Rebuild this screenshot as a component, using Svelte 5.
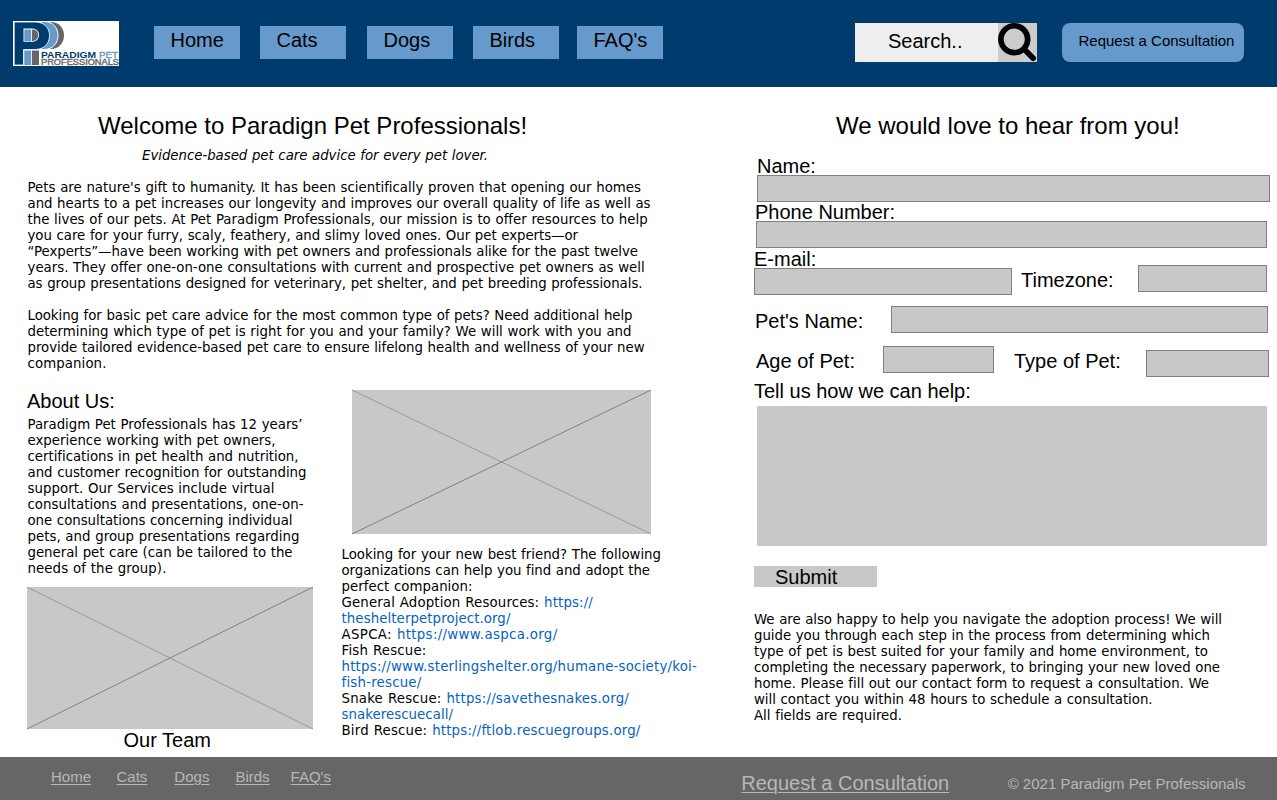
<script>
  const nav = [
    { label: 'Home', gap: 0 },
    { label: 'Cats', gap: 20 },
    { label: 'Dogs', gap: 21 },
    { label: 'Birds', gap: 20 },
    { label: "FAQ's", gap: 18 }
  ];
  const intro = [
    ["Pets are nature's gift to humanity. It has been scientifically proven that opening our homes", 613.5],
    ['and hearts to a pet increases our longevity and improves our overall quality of life as well as', 623],
    ['the lives of our pets. At Pet Paradigm Professionals, our mission is to offer resources to help', 620],
    ['you care for your furry, scaly, feathery, and slimy loved ones. Our pet experts—or', 550.5],
    ['“Pexperts”—have been working with pet owners and professionals alike for the past twelve', 610.5],
    ['years. They offer one-on-one consultations with current and prospective pet owners as well', 617],
    ['as group presentations designed for veterinary, pet shelter, and pet breeding professionals.', 615]
  ];
  const advice = [
    ['Looking for basic pet care advice for the most common type of pets? Need additional help', 605],
    ['determining which type of pet is right for you and your family? We will work with you and', 604],
    ['provide tailored evidence-based pet care to ensure lifelong health and wellness of your new', 617],
    ['companion.', 79]
  ];
  const about = [
    ['Paradigm Pet Professionals has 12 years’', 275],
    ['experience working with pet owners,', 248],
    ['certifications in pet health and nutrition,', 271],
    ['and customer recognition for outstanding', 279],
    ['support. Our Services include virtual', 247],
    ['consultations and presentations, one-on-', 276],
    ['one consultations concerning individual', 265],
    ['pets, and group presentations regarding', 272],
    ['general pet care (can be tailored to the', 265],
    ['needs of the group).', 139]
  ];
  const resources = [
    ['Looking for your new best friend? The following', '', 319.5],
    ['organizations can help you find and adopt the', '', 308.5],
    ['perfect companion:', '', 131],
    ['General Adoption Resources: ', 'https://', 251.5],
    ['', 'theshelterpetproject.org/', 169],
    ['ASPCA: ', 'https://www.aspca.org/', 216],
    ['Fish Rescue:', '', 85],
    ['', 'https://www.sterlingshelter.org/humane-society/koi-', 355.5],
    ['', 'fish-rescue/', 80],
    ['Snake Rescue: ', 'https://savethesnakes.org/', 287.5],
    ['', 'snakerescuecall/', 111.5],
    ['Bird Rescue: ', 'https://ftlob.rescuegroups.org/', 299]
  ];
  const closing = [
    ['We are also happy to help you navigate the adoption process! We will', 468],
    ['guide you through each step in the process from determining which', 456],
    ['type of pet is best suited for your family and home environment, to', 454],
    ['completing the necessary paperwork, to bringing your new loved one', 466],
    ['home. Please fill out our contact form to request a consultation. We', 455],
    ['will contact you within 48 hours to schedule a consultation.', 398.5],
    ['All fields are required.', 148]
  ];

  // Tracks the letters of a line so that it sets to the given measure.
  function measure(node, width) {
    const natural = node.getBoundingClientRect().width;
    node.style.letterSpacing = (width - natural) / node.textContent.length + 'px';
  }
</script>

{#snippet copy(lines)}
  {#each lines as [text, width]}
    <div class="line"><span use:measure={width}>{text}</span></div>
  {/each}
{/snippet}

{#snippet placeholder(w, h)}
  <svg class="placeholder" width={w} height={h} viewBox="0 0 {w} {h}">
    <rect width={w} height={h} fill="#c8c8c8" />
    <path d="M0 0L{w} {h}" stroke="#999" />
    <path d="M0 {h}L{w} 0" stroke="#808080" />
  </svg>
{/snippet}

<div class="page">
  <header>
    <svg class="logo" width="106" height="45" viewBox="0 0 106 45">
      <rect width="106" height="45" fill="#fff" />
      <path d="M34 1H37.500C46 1 51 7 51 14.500S46 28 37.500 28H34Z" fill="#666" />
      <path d="M28 .5H31C40 .5 45 7 45 14.500S40 28.500 31 28.500H28Z" fill="#69c" stroke="#fff" />
      <path d="M1.200 1H22C31 1 36.500 6.500 36.500 14.500S31 28.500 22 28.500H10.500V44H1.200Z" fill="#003b6d" stroke="#fff" stroke-width=".8" />
      <path d="M10.500 7.500H19C23 7.500 26 10 26 14S23 20.800 19 20.800H10.500Z" fill="#fff" />
      <path d="M11.300 8.500H18.200V20H11.300ZM11.300 29.500H18.200V44H11.300Z" fill="#69c" />
      <path d="M19 8.500C23 8.500 25.200 10.500 25.200 14S23 20 19 20ZM19 29.500H26V44H19Z" fill="#666" />
      <text x="28" y="36.500" font-size="9.200" font-weight="700" textLength="55" lengthAdjust="spacingAndGlyphs" fill="#003b6d">PARADIGM</text>
      <text x="86" y="36.500" font-size="9.200" textLength="19" lengthAdjust="spacingAndGlyphs" fill="#69c" stroke="#69c" stroke-width=".35">PET</text>
      <text x="28" y="44.100" font-size="9.200" textLength="78" lengthAdjust="spacingAndGlyphs" fill="#666" stroke="#666" stroke-width=".4">PROFESSIONALS</text>
    </svg>
    <nav>
      {#each nav as item}
        <a href="#top" class="tab" style:margin-left="{item.gap}px">{item.label}</a>
      {/each}
    </nav>
    <div class="search">
      <span>Search..</span>
      <svg width="39" height="39" viewBox="0 0 39 39">
        <rect width="39" height="39" fill="#ccc" />
        <circle cx="16.300" cy="16.200" r="13.400" fill="none" stroke="#000" stroke-width="5.600" />
        <path d="M26.500 26.500L35.200 35.300" stroke="#000" stroke-width="5.600" stroke-linecap="round" />
      </svg>
    </div>
    <a href="#top" class="consult">Request a Consultation</a>
  </header>

  <main>
    <section class="left">
      <h1>Welcome to Paradign Pet Professionals!</h1>
      <div class="tagline line"><span use:measure={346}>Evidence-based pet care advice for every pet lover.</span></div>
      <div class="intro">{@render copy(intro)}</div>
      <div class="advice">{@render copy(advice)}</div>
      <div class="columns">
        <div class="about">
          <h2>About Us:</h2>
          <div class="about-text">{@render copy(about)}</div>
          {@render placeholder(286, 142)}
          <h2 class="team">Our Team</h2>
        </div>
        <div class="resources">
          {@render placeholder(299, 144)}
          <div class="links">
            {#each resources as [text, link, width]}
              <div class="line"><span use:measure={width}>{text}{#if link}<a href="#top">{link}</a>{/if}</span></div>
            {/each}
          </div>
        </div>
      </div>
    </section>

    <section class="right">
      <h1>We would love to hear from you!</h1>
      <div class="label name">Name:</div>
      <div class="field f-name"></div>
      <div class="label phone">Phone Number:</div>
      <div class="field f-phone"></div>
      <div class="row email-row">
        <div class="email">
          <div class="label">E-mail:</div>
          <div class="field"></div>
        </div>
        <div class="label zone">Timezone:</div>
        <div class="field f-zone"></div>
      </div>
      <div class="row pet-row">
        <div class="label">Pet's Name:</div>
        <div class="field f-pet"></div>
      </div>
      <div class="row age-row">
        <div class="label age">Age of Pet:</div>
        <div class="field f-age"></div>
        <div class="label type">Type of Pet:</div>
        <div class="field f-type"></div>
      </div>
      <div class="label">Tell us how we can help:</div>
      <div class="message"></div>
      <div class="submit">Submit</div>
      <div class="closing">{@render copy(closing)}</div>
    </section>
  </main>

  <footer>
    <a href="#top">Home</a>
    <a href="#top">Cats</a>
    <a href="#top" class="dogs">Dogs</a>
    <a href="#top" class="birds">Birds</a>
    <a href="#top" class="faqs">FAQ's</a>
    <a href="#top" class="request">Request a Consultation</a>
    <span class="copyright">© 2021 Paradigm Pet Professionals</span>
  </footer>
</div>

<style>
  :global(body) { margin: 0; background: #fff; }
  .page {
    width: 1277px; height: 800px; overflow: hidden;
    display: flex; flex-direction: column;
    font: 20px/20px "Liberation Sans", Arial, sans-serif; color: #000;
  }
  .page * { box-sizing: border-box; }
  a { color: inherit; text-decoration: none; }
  svg { display: block; flex: none; }
  header { height: 87px; background: #003b6d; display: flex; flex: none; align-items: flex-start; padding-left: 13px; white-space: nowrap; }
  .logo { margin-top: 21px; }
  nav { display: flex; margin: 26px 0 0 35px; }
  .tab { width: 86px; height: 33px; background: #69c; padding: 4px 0 0 16.5px; }
  .search { display: flex; width: 182px; height: 39px; margin: 23px 0 0 192px; background: #eee; }
  .search span { width: 143px; padding: 8px 0 0 33px; }
  .consult { width: 182px; height: 39px; margin: 23px 0 0 25px; padding: 8px 0 0 16.5px; border-radius: 8px; background: #69c; font-size: 15px; }
  main { display: flex; height: 670px; flex: none; }
  h1, h2 { font-weight: 400; margin: 0; white-space: nowrap; }
  h1 { font-size: 24px; line-height: 24px; }
  h2 { font-size: 20px; line-height: 20px; }
  .left { width: 754px; flex: none; padding: 27px 0 0 27px; }
  .left h1 { padding-left: 71px; }
  .line { height: 16px; font: 13.33px/16px Verdana, "DejaVu Sans", sans-serif; word-spacing: .45px; white-space: nowrap; }
  .tagline { margin: 10px 0 16px 115px; font-style: italic; }
  .intro, .advice, .about-text, .links { padding-left: .5px; }
  .advice { margin: 16px 0 18px; }
  .columns { display: flex; }
  .about { width: 286px; padding-top: 1px; }
  .about-text { margin: 6px 0 10px; }
  .team { margin: 1px 0 0 96.5px; }
  .resources { margin-left: 28px; }
  .resources .placeholder { margin-left: 11px; }
  .placeholder { overflow: visible; }
  .links { margin-top: 13px; }
  .links a { color: #0563c1; }
  .right { width: 523px; flex: none; padding-top: 27px; }
  .right h1 { padding-left: 82px; }
  .label { height: 20px; white-space: nowrap; }
  .field { height: 27px; flex: none; background: #c8c8c8; border: 1px solid #808080; }
  .name { height: 19px; margin: 18px 0 0 3px; }
  .f-name { width: 513px; margin-left: 3px; }
  .phone { height: 19px; margin-left: 1px; }
  .f-phone { width: 511px; margin-left: 2px; }
  .row { display: flex; align-items: flex-start; }
  .email-row { height: 58px; padding-top: 1px; }
  .email .label { height: 19px; }
  .email .field { width: 258px; }
  .zone { width: 117px; margin: 21px 0 0 9px; }
  .f-zone { width: 129px; margin-top: 16px; }
  .pet-row { height: 40px; padding-left: 1px; }
  .pet-row .label { width: 136px; margin-top: 5px; }
  .f-pet { width: 377px; }
  .age-row { height: 35px; padding-left: 2px; }
  .age { width: 127px; margin-top: 5px; }
  .f-age { width: 111px; }
  .type { width: 132px; margin: 5px 0 0 20px; }
  .f-type { width: 123px; margin-top: 4px; }
  .message { width: 510px; height: 140px; margin: 5px 0 20px 3px; background: #c8c8c8; }
  .submit { width: 123px; height: 21px; padding: 1px 0 0 21px; background: #c8c8c8; }
  .closing { margin-top: 25px; }
  footer { height: 43px; background: #666; color: #b8b8b8; display: flex; align-items: flex-start; padding: 10px 0 0 51px; font-size: 15px; white-space: nowrap; }
  footer a { text-decoration: underline; text-underline-offset: 2px; text-decoration-thickness: 1px; margin-right: 25.500px; }
  footer .dogs { margin: 0 26px 0 1.500px; }
  footer .birds { margin-right: 21px; }
  footer .faqs { margin-right: 0; }
  footer .request { margin: 6px 0 0 auto; font-size: 20px; }
  .copyright { margin: 7px 31.500px 0 58.500px; }
</style>
